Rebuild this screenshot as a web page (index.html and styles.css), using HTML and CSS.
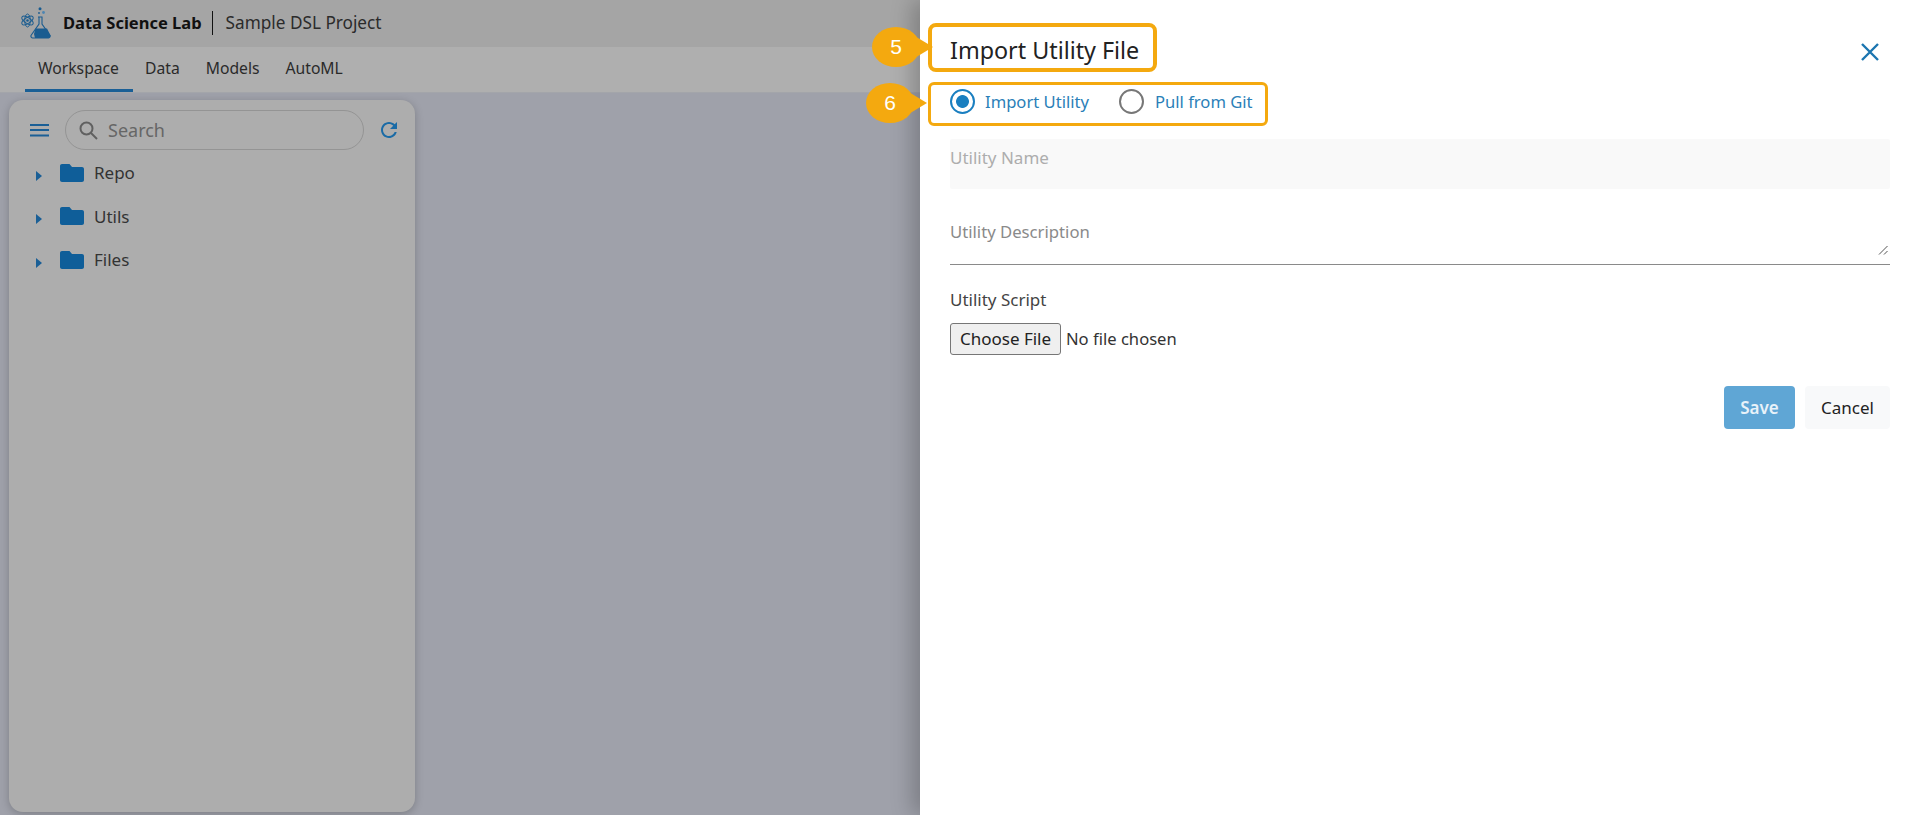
FILE: index.html
```html
<!DOCTYPE html>
<html lang="en">
<head>
<meta charset="utf-8">
<title>Import Utility File</title>
<link rel="stylesheet" href="styles.css">
</head>
<body>
<div class="app">
  <header class="topbar">
    <svg class="logo" viewBox="0 0 32 32" fill="none" stroke="#1a5c90">
      <g stroke-width="1">
        <ellipse cx="7.5" cy="13.5" rx="6.5" ry="2.8" transform="rotate(35 7.5 13.5)"/>
        <ellipse cx="7.5" cy="13.5" rx="6.5" ry="2.8" transform="rotate(-35 7.5 13.5)"/>
        <ellipse cx="7.5" cy="13.5" rx="2.8" ry="6.5"/>
      </g>
      <circle cx="7.5" cy="13.5" r="1.3" fill="#1a5c90" stroke="none"/>
      <circle cx="20" cy="1.8" r="1.5" fill="#1a5c90" stroke="none"/>
      <circle cx="23.5" cy="5.5" r="1.4" fill="#4d86b3" stroke="none"/>
      <circle cx="19" cy="6" r=".9" fill="#1a5c90" stroke="none"/>
      <path d="M18 10h4.500M19 10v7L11 28.500q-.5 2 1.500 2.500h16q2-.5 1.500-2.500L22 17v-7" stroke-width="1.100"/>
      <path d="M15.500 21.500h11.500l3.500 7q0 2-2 2.500H15l-1-4z" fill="#1a5c90" stroke="none"/>
    </svg>
    <span class="brand">Data Science Lab</span>
    <span class="project">Sample DSL Project</span>
  </header>
  <nav class="tabs">
    <a class="tab active">Workspace</a>
    <a class="tab">Data</a>
    <a class="tab">Models</a>
    <a class="tab">AutoML</a>
  </nav>
  <main class="workspace">
    <aside class="panel">
      <div class="toolbar">
        <svg class="menu" viewBox="0 0 19 13" fill="#1a5f96"><rect width="19" height="2"/><rect y="5" width="19" height="2"/><rect y="10.500" width="19" height="2"/></svg>
        <div class="search">
          <svg class="search-icon" viewBox="0 0 19 19" fill="none" stroke="#606060" stroke-width="2"><circle cx="7.500" cy="7.500" r="6"/><path d="M12 12l6 6"/></svg>
          <span>Search</span>
        </div>
        <svg class="refresh" viewBox="0 0 24 24" fill="#1a6ba6"><path d="M17.650 6.350C16.200 4.900 14.210 4 12 4c-4.420 0-7.990 3.580-7.990 8s3.570 8 7.990 8c3.730 0 6.840-2.550 7.730-6h-2.080c-.82 2.330-3.040 4-5.650 4-3.310 0-6-2.690-6-6s2.690-6 6-6c1.660 0 3.140.69 4.220 1.780L13 11h7V4l-2.350 2.350z"/></svg>
      </div>
      <ul class="tree">
        <li class="node"><i class="caret"></i><svg class="folder" viewBox="0 0 24 18"><path d="M9.500 0H2C.9 0 0 .9 0 2v14c0 1.100.9 2 2 2h20c1.100 0 2-.9 2-2V5c0-1.100-.9-2-2-2H12z"/></svg><span>Repo</span></li>
        <li class="node"><i class="caret"></i><svg class="folder" viewBox="0 0 24 18"><path d="M9.500 0H2C.9 0 0 .9 0 2v14c0 1.100.9 2 2 2h20c1.100 0 2-.9 2-2V5c0-1.100-.9-2-2-2H12z"/></svg><span>Utils</span></li>
        <li class="node"><i class="caret"></i><svg class="folder" viewBox="0 0 24 18"><path d="M9.500 0H2C.9 0 0 .9 0 2v14c0 1.100.9 2 2 2h20c1.100 0 2-.9 2-2V5c0-1.100-.9-2-2-2H12z"/></svg><span>Files</span></li>
      </ul>
    </aside>
  </main>
  <section class="drawer">
    <div class="callout callout-five">5</div>
    <div class="callout callout-six">6</div>
    <svg class="close" viewBox="0 0 18 18" fill="none" stroke="#1b75b0" stroke-width="2.400"><path d="M1 1l16 16M17 1L1 17"/></svg>
    <h1 class="title">Import Utility File</h1>
    <div class="radios">
      <span class="radio checked"></span><span class="radio-label">Import Utility</span>
      <span class="radio second"></span><span class="radio-label">Pull from Git</span>
    </div>
    <div class="name-field">Utility Name</div>
    <div class="desc-field">
      <span>Utility Description</span>
      <svg class="grip" viewBox="0 0 10 10" fill="none" stroke="#555" stroke-width="1"><path d="M1 9.500L9.500 1M6 9.500L9.500 6"/></svg>
    </div>
    <div class="script-label">Utility Script</div>
    <div class="file-row"><button class="file-btn">Choose File</button><span class="file-name">No file chosen</span></div>
    <div class="actions">
      <button class="btn save">Save</button>
      <button class="btn cancel">Cancel</button>
    </div>
  </section>
</div>
</body>
</html>
```
FILE: styles.css
```css
* { box-sizing: border-box; }
html, body { margin: 0; height: 100%; }
body { font-family: "Noto Sans", "Liberation Sans", sans-serif; overflow: hidden; }

.app {
  position: relative;
  width: 1919px;
  height: 815px;
  display: flex;
  flex-direction: column;
  overflow: hidden;
  background: #9fa1aa;
}

.topbar {
  height: 47px;
  flex: none;
  display: flex;
  align-items: center;
  padding: 0 0 2px 20px;
  background: #a5a5a5;
}
.logo { width: 32px; height: 32px; margin-right: 11px; }
.brand {
  font-size: 16.5px;
  font-weight: 700;
  color: #111;
  padding-right: 10px;
  border-right: 1px solid #111;
  line-height: 24px;
}
.project { font-size: 17.2px; color: #2b2b2b; padding-left: 13px; }

.tabs {
  height: 46px;
  flex: none;
  display: flex;
  padding-left: 25px;
  background: #afafaf;
  border-bottom: 1px solid #a3a5aa;
}
.tab {
  height: 45px;
  padding: 0 13px;
  font-size: 15.700px;
  line-height: 42px;
  color: #2a2a2a;
}
.tab.active { width: 108px; border-bottom: 3px solid #1a5f96; }
.tab.active + .tab { margin-left: -1px; }

.workspace { flex: 1; padding: 7px 0 3px 9px; min-height: 0; }
.panel {
  width: 406px;
  height: 100%;
  background: #adadad;
  border-radius: 14px;
  box-shadow: 0 2px 8px rgba(0, 0, 0, .22);
  padding: 10px 14px 10px 21px;
}
.toolbar { display: flex; align-items: center; height: 40px; }
.menu { width: 19px; height: 13px; margin-right: 16px; flex: none; }
.search {
  width: 299px;
  height: 40px;
  flex: none;
  border: 1px solid #949494;
  border-radius: 20px;
  display: flex;
  align-items: center;
  padding-left: 13px;
  font-size: 18px;
  color: #666;
}
.search-icon { width: 19px; height: 19px; margin-right: 10px; }
.refresh { width: 24px; height: 24px; margin-left: 13px; flex: none; }

.tree { list-style: none; margin: 1px 0 0; padding: 0; }
.node {
  display: flex;
  align-items: center;
  height: 43.500px;
  font-size: 17px;
  color: #333;
  padding-left: 6px;
}
.caret {
  width: 0;
  height: 0;
  border-left: 6px solid #1a5f96;
  border-top: 5px solid transparent;
  border-bottom: 5px solid transparent;
  margin: 6px 18px 0 0;
}
.folder { width: 24px; height: 18px; fill: #0f5e99; margin-right: 10px; }

.drawer {
  position: absolute;
  top: 0;
  right: 0;
  bottom: 0;
  width: 999px;
  background: #fff;
  padding: 23px 29px 0 30px;
  box-shadow: -8px 0 20px rgba(0, 0, 0, .22);
}
.title {
  width: 229px;
  height: 49px;
  margin: 0 0 0 -22px;
  padding-left: 18px;
  border: 4px solid #f4a90f;
  border-radius: 8px;
  font-size: 23.300px;
  font-weight: 400;
  line-height: 47px;
  color: #222;
  white-space: nowrap;
}
.close { position: absolute; top: 43px; right: 40px; width: 18px; height: 18px; }

.callout {
  position: absolute;
  width: 48px;
  height: 40px;
  border-radius: 50%;
  background: #f4a90f;
  color: #fff;
  font: 21px/40px "Liberation Sans", sans-serif;
  text-align: center;
}
.callout::after {
  content: "";
  position: absolute;
  left: 31px;
  top: 2px;
  width: 30px;
  height: 36px;
  background: #f4a90f;
  clip-path: polygon(0 0, 100% 50%, 0 100%);
}
.callout-five { left: -48px; top: 27px; }
.callout-six { left: -54px; top: 83px; }

.radios {
  display: flex;
  align-items: center;
  width: 340px;
  height: 44px;
  margin: 10px 0 0 -22px;
  padding: 0 0 6px 19px;
  border: 3px solid #f4a90f;
  border-radius: 6px;
  font-size: 16.600px;
  color: #2a7fb8;
  white-space: nowrap;
}
.radio {
  width: 25px;
  height: 25px;
  flex: none;
  border: 2.500px solid #777;
  border-radius: 50%;
  margin-right: 10px;
}
.radio.second { margin-left: 30px; margin-right: 11px; }
.radio.checked {
  border-color: #1a7fc0;
  background: radial-gradient(circle, #1a7fc0 6px, #fff 6.800px);
}

.name-field {
  height: 50px;
  margin-top: 13px;
  background: #f9f9f9;
  border-radius: 2px;
  font-size: 17px;
  line-height: 38px;
  color: #adadad;
}
.desc-field {
  position: relative;
  height: 52px;
  margin-top: 24px;
  border-bottom: 1px solid #8a8a8a;
  font-size: 16.700px;
  line-height: 38px;
  color: #8a8a8a;
}
.grip { position: absolute; right: 2px; bottom: 9px; width: 10px; height: 10px; }
.script-label { margin-top: 23px; font-size: 17px; line-height: 24px; color: #444; }
.file-row {
  display: flex;
  align-items: center;
  margin-top: 11px;
  font-size: 16.600px;
  color: #333;
}
.file-btn {
  width: 111px;
  height: 32px;
  margin-right: 5px;
  padding: 0 0 2px;
  border: 1px solid #767676;
  border-radius: 3px;
  background: #efefef;
  font: inherit;
  font-size: 17px;
  color: #222;
}
.file-name { padding-bottom: 2px; }
.actions { display: flex; justify-content: flex-end; gap: 10px; margin-top: 31px; }
.btn {
  height: 43px;
  border: 0;
  border-radius: 4px;
  font: inherit;
  font-size: 17px;
}
.save { width: 71px; background: #5fa6d5; color: #e8f2f9; font-weight: 600; }
.cancel { width: 85px; background: #f8f9fa; color: #222; }
```
